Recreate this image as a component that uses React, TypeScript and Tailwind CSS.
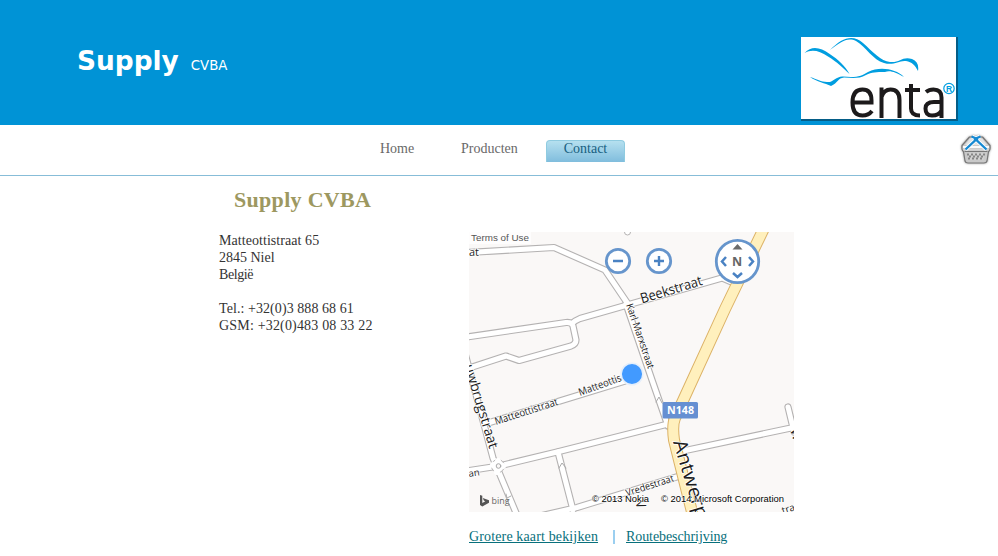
import React from "react";

const serif = "font-['Liberation_Serif',serif]";

const minorRoads = [
  "M460 253 L554 247.500 L605 270 L628 304",
  "M460 338 L566 322.500 Q572 322 573 326 L576 340 Q576 344 571 346 L519 360.500 L506 356 L460 371",
  "M572 323.500 Q575 320.500 580 318.500 L722 278 L736 284",
  "M626 304 L652 380 L668 426",
  "M488 423 L625 381",
  "M462 342 L493 458 L519 520",
  "M460 472 L499 466 L557 452 L668 424",
  "M558 452 L573 510 M540 516 L577 507.500 L683 475",
  "M683 451 L791 428 M788 407 L794 432",
];

function Roads() {
  return (
    <g fill="none" strokeLinejoin="round" strokeLinecap="round">
      {minorRoads.map((d) => (
        <path key={d} d={d} stroke="#b4b2b2" strokeWidth="7.200" />
      ))}
      {minorRoads.map((d) => (
        <path key={d} d={d} stroke="#fff" strokeWidth="5" />
      ))}
      <circle cx="498" cy="466" r="6.500" fill="#fff" stroke="#b4b2b2" />
      <path d="M493 465 L503 466 M498 461 L497 472" stroke="#fff" strokeWidth="6" />
      <circle cx="498.500" cy="466" r="2.300" fill="#faf8f7" stroke="#aaa" />
      <path d="M656 402 l3 -5 3 6 M559 468 l3 -5 4 5 M506 494 l1 4 4 -2" stroke="#aaa" />
      <path d="M768 220 L725 309 L675 418 Q672 425 674 440 L694 520" stroke="#dcb266" strokeWidth="12" />
      <path d="M768 220 L725 309 L675 418 Q672 425 674 440 L694 520" stroke="#fff0bd" strokeWidth="10" />
    </g>
  );
}

function StreetNames() {
  return (
    <g className="font-['Open_Sans',sans-serif] font-medium" fill="#1c1c1c" stroke="#fff" strokeWidth="1.500" strokeLinejoin="round" paintOrder="stroke">
      <text x="469" y="256" fontSize="10" textLength="10" lengthAdjust="spacingAndGlyphs">at</text>
      <text transform="translate(642 303.500) rotate(-17)" fontSize="14" textLength="64" lengthAdjust="spacingAndGlyphs">Beekstraat</text>
      <text transform="translate(626 305) rotate(71)" fontSize="10" textLength="68" lengthAdjust="spacingAndGlyphs">Karl Marxstraat</text>
      <text transform="translate(496 425) rotate(-18)" fontSize="10.500" textLength="66" lengthAdjust="spacingAndGlyphs">Matteottistraat</text>
      <text transform="translate(580 396) rotate(-20)" fontSize="10.500" textLength="45" lengthAdjust="spacingAndGlyphs">Matteottis</text>
      <text transform="translate(464 366) rotate(73)" fontSize="14" textLength="87" lengthAdjust="spacingAndGlyphs">uwbrugstraat</text>
      <text transform="translate(469 477) rotate(-9)" fontSize="9.500">an</text>
      <text transform="translate(627 496.500) rotate(-18)" fontSize="10" textLength="50" lengthAdjust="spacingAndGlyphs">Vredestraat</text>
      <text transform="translate(673 442) rotate(73)" fontSize="19" textLength="91" lengthAdjust="spacingAndGlyphs">Antwerps</text>
      <text transform="translate(635 502) rotate(70)" fontSize="13">V</text>
      <text transform="translate(790 430) rotate(72)" fontSize="13">W</text>
      <text transform="translate(783 514) rotate(-18)" fontSize="10">tra</text>
    </g>
  );
}

function MapControls() {
  return (
    <g fill="none" stroke="#6695cc">
      <g fill="#fff" strokeWidth="2.800">
        <circle cx="618" cy="261" r="11.700" />
        <circle cx="659" cy="261" r="11.700" />
        <circle cx="737.500" cy="261.500" r="21.200" />
      </g>
      <path d="M613 261 h10 M654 261 h10 M659 256 v10" stroke="#4a82c3" strokeWidth="2.400" />
      <path d="M726 257 l-4 4.500 4 4.500 M749 257 l4 4.500 -4 4.500 M733 273 l4.500 4 4.500 -4" strokeWidth="2.500" stroke="#4a82c3" />
      <path d="M732.500 249.500 l5 -5.500 5 5.500z" fill="#6b6b6b" stroke="none" />
      <text x="732" y="266" className="font-['Noto_Sans',sans-serif]" fontSize="12.500" fontWeight="700" fill="#666" stroke="none">N</text>
      <circle cx="632" cy="374" r="10.800" fill="#429aff" stroke="#e5effb" strokeWidth="1.500" />
      <rect x="662.500" y="402" width="35.500" height="16.500" rx="1.500" fill="#658fd2" stroke="none" />
      <text x="667" y="414" className="font-['Noto_Sans',sans-serif]" fontSize="10.500" fontWeight="700" fill="#fff" stroke="none" textLength="27" lengthAdjust="spacingAndGlyphs">N148</text>
    </g>
  );
}

function ContactMap() {
  return (
    <svg className="block h-[280px] w-[325px]" viewBox="469 232 325 280">
      <rect x="469" y="232" width="325" height="280" fill="#faf8f7" />
      <circle cx="627.500" cy="232" r="3" fill="#fff" stroke="#b4b2b2" />
      <Roads />
      <StreetNames />
      <MapControls />
      <rect x="469" y="232" width="62" height="12" fill="#fff" opacity=".75" />
      <text x="471" y="241" className="font-['Liberation_Sans',sans-serif]" fontSize="9.500" fill="#555" textLength="58" lengthAdjust="spacingAndGlyphs">Terms of Use</text>
      <g className="font-['Liberation_Sans',sans-serif]" fontSize="9.500" fill="#000" stroke="#fff" strokeWidth="1" paintOrder="stroke">
        <text x="592" y="502" textLength="57" lengthAdjust="spacingAndGlyphs">© 2013 Nokia</text>
        <text x="661" y="502" textLength="123" lengthAdjust="spacingAndGlyphs">© 2014 Microsoft Corporation</text>
      </g>
      <path d="M480 495 l2.300 .8 v7.200 l3 -1.800 -1.500 -.7 -1 -2.600 6.200 2.300 v2.500 l-6.700 3.800 -2.300 -1.500z" fill="#555" />
      <text x="491.500" y="504" className="font-['Open_Sans',sans-serif]" fontSize="9.500" fill="#666" textLength="18" lengthAdjust="spacingAndGlyphs">bing</text>
    </svg>
  );
}

function EntaLogo() {
  return (
    <svg className="block h-[82px] w-[155px]" viewBox="801 37 155 82">
      <rect x="801" y="37" width="155" height="82" fill="#fff" />
      <g fill="#009ee0">
        <path d="M804.500 53 C812 45 821 48 829 53.500 C839 60 845 66 849.500 74 C843 68 837 62 828 56.500 C819 50.500 812 49 804.500 53Z" />
        <path d="M830 50 C842 37.500 853 34 863 43 C873 52 881 61 890 62 C900 63 902 56 912 59 C917 61 919 65 918 71 C915 65 912 62 906 61 C899 60 894 66 884 63 C873 60 866 47 856 41 C847 37 841 42 830 50Z" />
        <path d="M810 77 C817 79 821 82 827 82 C833 83 836 76 843 76.500 C856 78 862 76 868 72 C880 66 896 69 904 77 C895 72 890 70 885 72 C876 72 872 72 866 75 C859 79 852 78 844 77.500 C838 78 838 83 831 86 C825 83 817 82 810 77Z" />
      </g>
      <g fill="none" stroke="#1c1a1b" strokeWidth="4">
        <path d="M853 102.500 H871.500 V100.500 C871.500 93 868 89.500 862.500 89.500 C856 89.500 852.500 94 852.500 102.500 C852.500 111.500 856 115.500 862.500 115.500 Q868.500 115.500 872 111" />
        <path d="M881.500 118 V87.500 M881.500 97 Q884 89.500 890.500 89.500 C897 89.500 899.500 93.500 899.500 100 V118" />
        <path d="M911 84 V108.500 Q911 115.500 920 115.500 M905 90 H920" />
        <path d="M926 92 Q929 89.500 933.500 89.500 Q941.500 89.500 941.500 97.500 V118 M941.500 102 H934 Q925.500 102 925.500 108.500 Q925.500 115.500 932 115.500 Q939 115.500 941.500 110.500" />
      </g>
      <circle cx="949" cy="88.500" r="5.200" fill="none" stroke="#009ee0" strokeWidth="1.200" />
      <text x="949" y="91.500" textAnchor="middle" className="font-['Liberation_Sans',sans-serif]" fontSize="8.500" fontWeight="700" fill="#009ee0">R</text>
    </svg>
  );
}

function Basket() {
  return (
    <svg className="h-9 w-9 drop-shadow-[0_0_1px_#999]" viewBox="958 132 36 36">
      <path d="M969.500 137 H982.500 L990 145.500 Q990.500 150.500 988.500 151.500 L987 161 Q986.500 163 984 163 H968 Q965.500 163 965 161 L963.500 151.500 Q961.500 150.500 962 145.500Z" fill="#c9c9c9" stroke="#777" strokeWidth="1.200" strokeLinejoin="round" />
      <path d="M970 138.500 H982 L987 145 H965Z" fill="#e4e4e4" />
      <path d="M963 147 H989" stroke="#fafafa" strokeWidth="2" />
      <path d="M963 149.500 H989" stroke="#d5d5d5" strokeWidth="1.500" />
      <path d="M964.500 151.500 H987.500" stroke="#777" />
      <path d="M967 153 H985 L983.500 160 H968.500Z" fill="#d0d0d0" />
      <path d="M967 154.500 H985 M968 158.500 H984" stroke="#858585" strokeWidth="2" strokeDasharray="2 2" />
      <path d="M969 156.500 H984" stroke="#858585" strokeWidth="2" strokeDasharray="2 2" />
      <path d="M972 136.500 L975 138 V140.500 L965.500 149.500 M980 136.500 L977 138 V140.500 L986.500 149.500" fill="none" stroke="#fff" strokeWidth="4" />
      <path d="M971.500 136.500 L975 138 V140.500 L965.500 149.500 M980.500 136.500 L977 138 V140.500 L986.500 149.500" fill="none" stroke="#1689d2" strokeWidth="2.400" />
    </svg>
  );
}

export default function App() {
  return (
    <div className={`flex h-[556px] w-[998px] flex-col overflow-hidden bg-white ${serif}`}>
      <header className="flex h-[125px] items-start justify-between bg-[#0093d6] pr-10 pl-[77px]">
        <div className="flex items-baseline gap-3 pt-[45px] font-['DejaVu_Sans',sans-serif] text-white">
          <h1 className="text-[26.4px] leading-8 font-bold">Supply</h1>
          <span className="text-[13.3px]">CVBA</span>
        </div>
        <div className="mt-[37px] border-r-2 border-b-2 border-[#055d87]"><EntaLogo /></div>
      </header>
      <nav className="flex h-[51px] items-start border-b border-[#87bdd8] pr-1 pl-[380px] text-sm text-[#696969]">
        <a className="mt-[15px] h-[22px] w-[81px] leading-[18px]">Home</a>
        <a className="mt-[15px] h-[22px] w-[85px] leading-[18px]">Producten</a>
        <a className="mt-[15px] flex h-[22px] w-[79px] justify-center rounded-t border border-b-0 border-[#8fcbe0] bg-linear-to-b from-[#b5e0ef] to-[#80bddd] leading-4 text-[#176080]">Contact</a>
        <div className="mt-[7px] ml-auto"><Basket /></div>
      </nav>
      <main className="flex pl-[219px]">
        <section className="w-[250px] shrink-0">
          <h2 className="mt-2.5 ml-[15px] text-[22px] leading-[28px] font-bold tracking-[0.3px] text-[#9d9860]">Supply CVBA</h2>
          <address className="mt-[18px] text-[14px] leading-[17px] whitespace-pre text-[#333] not-italic">
            <p className="tracking-[0.06px]">Matteottistraat 65</p>
            <p>2845 Niel</p>
            <p className="tracking-[-0.4px]">België</p>
            <p className="mt-[17px] tracking-[0.07px]">Tel.: +32(0)3 888 68 61</p>
            <p className="tracking-[0.18px]">GSM: +32(0)483 08 33 22</p>
          </address>
        </section>
        <section className="pt-14">
          <ContactMap />
          <div className="mt-4 flex items-center text-[14px] leading-[18px] text-[#08707c]">
            <span className="w-[144px]"><a className="tracking-[0.14px] underline">Grotere kaart bekijken</a></span>
            <span className="mr-[11px] h-3.5 w-0.5 bg-[#9bcff0]" />
            <a className="tracking-[-0.08px] underline">Routebeschrijving</a>
          </div>
        </section>
      </main>
    </div>
  );
}
